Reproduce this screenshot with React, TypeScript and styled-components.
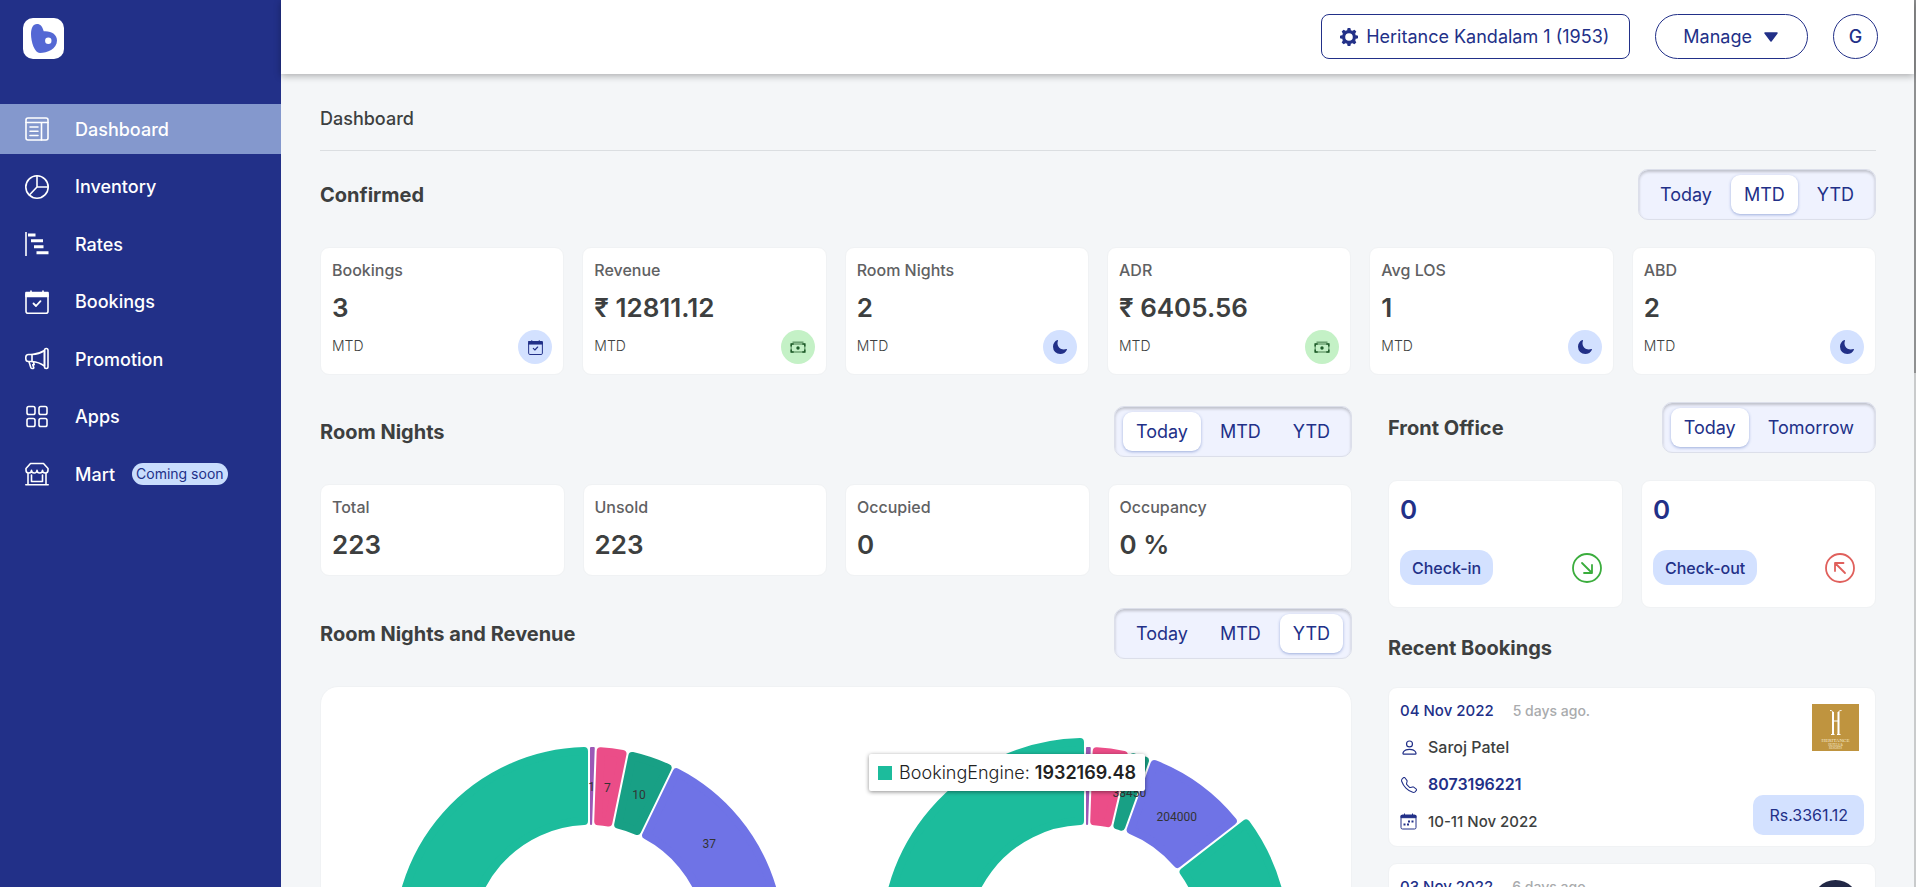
import React from "react";
import styled, { createGlobalStyle } from "styled-components";
import { IoMoon } from "react-icons/io5";
import { BsPerson, BsTelephone } from "react-icons/bs";

const navy = "#223088";
const ink = "#3d3f40";
const paleBlue = "#d3e1ff";

const GlobalStyle = createGlobalStyle`
  *, *::before, *::after { box-sizing: border-box; }
  body {
    margin: 0;
    font-family: Inter, "Liberation Sans", sans-serif;
    color: ${ink};
    background: #f4f6f8;
  }
  h1, h2, h3, p, ul { margin: 0; padding: 0; }
  button { font: inherit; cursor: pointer; }
  a { color: inherit; text-decoration: none; }
  svg { display: block; flex: none; }
`;

/* ---------- shell ---------- */

const Shell = styled.div`
  display: flex;
  height: 100vh;
  overflow: hidden;
`;

const Sidebar = styled.aside`
  flex: none;
  width: 281px;
  background: ${navy};
  color: #fff;
`;

const Brand = styled.a`
  display: block;
  width: 41px;
  margin: 18px 0 45px 23px;
`;

const NavList = styled.ul`
  display: flex;
  flex-direction: column;
  justify-content: space-between;
  min-height: 395px;
  list-style: none;
`;

const NavLink = styled.a<{ $active?: boolean }>`
  display: flex;
  align-items: center;
  height: 50px;
  padding-left: 25px;
  background: ${(p) => (p.$active ? "#8498cd" : "transparent")};
  font-size: 18px;
  font-weight: 500;
`;

const NavText = styled.span`
  margin-left: 26px;
`;

const Soon = styled.span`
  margin-left: 17px;
  padding: 0 4px;
  border-radius: 11px;
  background: #c9ddfd;
  color: ${navy};
  font-size: 14px;
  font-weight: 400;
  line-height: 22px;
`;

const Page = styled.div`
  flex: 1;
  min-width: 0;
  display: flex;
  flex-direction: column;
`;

const TopBar = styled.header`
  flex: none;
  z-index: 1;
  display: flex;
  justify-content: flex-end;
  gap: 25px;
  padding: 14px 36px 15px;
  background: #fff;
  box-shadow: 0 2px 7px rgba(0, 0, 0, 0.3);
`;

const TopButton = styled.button<{ $shape: "box" | "pill" | "round" }>`
  display: flex;
  align-items: center;
  justify-content: center;
  height: 45px;
  width: ${(p) => (p.$shape === "round" ? "45px" : "auto")};
  padding: ${(p) => ({ box: "0 20px 0 18px", pill: "0 29px 0 27px", round: "0" })[p.$shape]};
  gap: ${(p) => (p.$shape === "box" ? "8px" : "12px")};
  border: 1px solid ${navy};
  border-radius: ${(p) => (p.$shape === "box" ? "8px" : "23px")};
  background: #fff;
  color: ${navy};
  font-size: 18px;
  font-weight: ${(p) => (p.$shape === "round" ? 500 : 400)};
`;

const Content = styled.main`
  flex: 1;
  min-height: 0;
  overflow-y: auto;
  scrollbar-width: none;
  padding: 33px 38px 40px 39px;
`;

const PageTitle = styled.h1`
  padding-bottom: 19px;
  border-bottom: 1px solid #dbdee1;
  font-size: 18px;
  font-weight: 500;
  line-height: 24px;
`;

const ScrollTrack = styled.div`
  flex: none;
  width: 2px;
  background: #c9cbcc;
`;

const ScrollThumb = styled.div`
  height: 42%;
  background: #8f9091;
`;

/* ---------- sections ---------- */

const Columns = styled.div`
  display: grid;
  grid-template-columns: minmax(0, 129fr) minmax(0, 61fr);
  gap: 36px;
  align-items: start;
  margin-top: 27px;
`;

const MainColumn = styled.div`
  padding-top: 4px;
`;

const SectionHead = styled.div<{ $top?: number }>`
  display: flex;
  align-items: center;
  justify-content: space-between;
  margin: ${(p) => p.$top ?? 0}px 0 27px;
`;

const SectionTitle = styled.h2`
  font-size: 20px;
  font-weight: 700;
  line-height: 24px;
`;

const ToggleBox = styled.div`
  display: flex;
  gap: 6px;
  padding: 5px 8px;
  border: 1px solid #dcdfea;
  border-radius: 10px;
  background: #eff2fe;
  box-shadow: inset 0 2px 3px rgba(0, 0, 0, 0.2);
`;

const ToggleButton = styled.button<{ $on: boolean }>`
  height: 39px;
  padding: 0 13px;
  border: 0;
  border-radius: 9px;
  background: ${(p) => (p.$on ? "#fff" : "transparent")};
  box-shadow: ${(p) => (p.$on ? "0 1px 3px rgba(60, 90, 180, 0.45)" : "none")};
  color: ${navy};
  font-size: 18px;
`;

const Cards = styled.div<{ $count: number }>`
  display: grid;
  grid-template-columns: repeat(${(p) => p.$count}, minmax(0, 1fr));
  gap: 18px;
`;

const Card = styled.article`
  border: 1px solid #f0f2f4;
  border-radius: 9px;
  background: #fff;
`;

const StatCard = styled(Card)`
  padding: 11px 11px 10px;
`;

const StatLabel = styled.h3`
  color: #5f6163;
  font-size: 16px;
  font-weight: 500;
  line-height: 22px;
`;

const StatValue = styled.p`
  margin: 10px 0 3px;
  font-size: 26px;
  font-weight: 600;
  line-height: 34px;
`;

const StatFoot = styled.div`
  display: flex;
  justify-content: space-between;
  margin-top: 5px;
  font-size: 14px;
  font-weight: 300;
  line-height: 32px;
`;

const Badge = styled.span<{ $green?: boolean }>`
  display: grid;
  place-items: center;
  width: 34px;
  height: 34px;
  border-radius: 50%;
  background: ${(p) => (p.$green ? "#c4f1c6" : paleBlue)};
  color: ${(p) => (p.$green ? "#1f5c2a" : navy)};
`;

/* ---------- front office ---------- */

const OfficeCard = styled(Card)`
  padding: 12px 20px 22px 11px;
`;

const OfficeValue = styled.p`
  color: ${navy};
  font-size: 26px;
  font-weight: 600;
  line-height: 34px;
`;

const OfficeFoot = styled.div`
  display: flex;
  align-items: center;
  justify-content: space-between;
  margin-top: 23px;
`;

const OfficeButton = styled.button`
  height: 35px;
  padding: 0 12px;
  border: 0;
  border-radius: 14px;
  background: ${paleBlue};
  color: ${navy};
  font-size: 16px;
  font-weight: 500;
`;

/* ---------- recent bookings ---------- */

const BookingList = styled.div`
  display: grid;
  gap: 16px;
`;

const BookingCard = styled(Card)`
  display: flex;
  justify-content: space-between;
  padding: 4px 11px 6px 11px;
`;

const BookingLine = styled.p<{ $blue?: boolean; $bold?: boolean; $small?: boolean }>`
  display: flex;
  align-items: center;
  gap: 11px;
  color: ${(p) => (p.$blue ? navy : ink)};
  font-size: ${(p) => (p.$small ? 15 : 16)}px;
  font-weight: ${(p) => (p.$bold ? 600 : 500)};
  line-height: 37px;
`;

const Ago = styled.span`
  margin-left: 8px;
  color: #a9abad;
  font-size: 14px;
`;

const BookingSide = styled.div`
  display: flex;
  flex-direction: column;
  align-items: flex-end;
  justify-content: space-between;
  padding-top: 12px;
`;

const LogoSlot = styled.div`
  margin-right: 5px;
`;

const Amount = styled.span`
  margin-bottom: 5px;
  padding: 0 16px;
  border-radius: 10px;
  background: ${paleBlue};
  color: ${navy};
  font-size: 16px;
  line-height: 40px;
`;

const LineIcon = styled.span`
  display: grid;
  place-items: center;
  width: 17px;
  color: ${navy};
`;

/* ---------- charts ---------- */

const ChartCard = styled(Card)`
  display: grid;
  grid-template-columns: repeat(2, minmax(0, 1fr));
  padding: 50px 18px 40px 20px;
  border-radius: 18px;
`;

const ChartCell = styled.div`
  position: relative;
  display: flex;
  justify-content: center;
`;

const Tooltip = styled.div`
  position: absolute;
  top: 17px;
  right: calc(50% - 60px);
  display: flex;
  align-items: center;
  gap: 7px;
  height: 37px;
  padding: 0 9px;
  border-radius: 2px;
  background: #fff;
  box-shadow: 0 1px 4px rgba(0, 0, 0, 0.45);
  color: #222;
  font-size: 18px;
  font-weight: 300;
  white-space: nowrap;
`;

const TooltipValue = styled.strong`
  font-weight: 600;
`;

const Swatch = styled.span`
  width: 14px;
  height: 14px;
  background: #1cbc9c;
`;

const ChartLabel = styled.text`
  fill: #333;
  font-family: Roboto, "Liberation Sans", sans-serif;
  font-size: 12px;
  text-anchor: middle;
`;

type Slice = { from: number; to: number; color: string; radius?: number; corner?: number; label?: string };

const INNER = 117;

/* Ring sector inset on every side, so that a round-joined stroke restores its size with soft corners. */
function sectorPath(s: Slice) {
  const corner = s.corner ?? 4;
  const ro = (s.radius ?? 195) - corner;
  const ri = INNER + corner;
  const inset = corner + 1;
  const point = (r: number, deg: number, side: number) => {
    const a = (deg * Math.PI) / 180 + side * Math.asin(inset / r);
    return `${(r * Math.sin(a)).toFixed(2)} ${(-r * Math.cos(a)).toFixed(2)}`;
  };
  const large = s.to - s.from > 180 ? 1 : 0;
  return `M${point(ro, s.from, 1)}A${ro} ${ro} 0 ${large} 1 ${point(ro, s.to, -1)}L${point(ri, s.to, -1)}A${ri} ${ri} 0 ${large} 0 ${point(ri, s.from, 1)}Z`;
}

function Donut({ slices, title }: { slices: Slice[]; title: string }) {
  return (
    <svg width="410" height="410" viewBox="-205 -205 410 410" role="img" aria-label={title}>
      {slices.map((s) => (
        <path key={s.from} d={sectorPath(s)} fill={s.color} stroke={s.color} strokeWidth={(s.corner ?? 4) * 2} strokeLinejoin="round" />
      ))}
      {slices.map((s) => {
        const mid = (((s.from + s.to) / 2) * Math.PI) / 180;
        return s.label ? (
          <ChartLabel key={s.from} x={156 * Math.sin(mid)} y={-156 * Math.cos(mid) + 5}>
            {s.label}
          </ChartLabel>
        ) : null;
      })}
    </svg>
  );
}

const nightSlices: Slice[] = [
  { from: 0, to: 2, color: "#9b59b6", corner: 1, label: "1" },
  { from: 2, to: 11.6, color: "#eb4d88", label: "7" },
  { from: 11.6, to: 25.8, color: "#18a085", label: "10" },
  { from: 25.8, to: 75, color: "#6f73e6", label: "37" },
  { from: 75, to: 360, color: "#1cbc9c" },
];

const revenueSlices: Slice[] = [
  { from: 0, to: 2, color: "#9b59b6", corner: 1 },
  { from: 2, to: 13.2, color: "#eb4d88" },
  { from: 13.2, to: 19.8, color: "#18a085", label: "38450" },
  { from: 19.8, to: 52.2, color: "#6f73e6", label: "204000" },
  { from: 52.2, to: 360, color: "#1cbc9c", radius: 204 },
];

/* ---------- icons ---------- */

const Line = ({ children, size = 24 }: { children: React.ReactNode; size?: number }) => (
  <svg width={size} height={size} viewBox="0 0 24 24" fill="none" stroke="currentColor" strokeWidth="1.6" strokeLinejoin="round" strokeLinecap="round" aria-hidden="true">
    {children}
  </svg>
);

const DashboardIcon = () => (
  <Line>
    <rect x="1" y="1" width="22" height="22" rx="2" />
    <path d="M1 5.5h22M16.5 5.5V23M5 10h8M5 14.2h8M5 18.5h8" />
  </Line>
);

const InventoryIcon = () => (
  <Line>
    <circle cx="12" cy="12" r="11.2" />
    <path d="M12 1v11h11M12 12l-7.6 8" />
  </Line>
);

const RatesIcon = () => (
  <Line>
    <path d="M1 0v24" strokeLinecap="butt" />
    <path d="M3 3h7.5M6 8.8h12M9 14.8h9.5M11.5 20.7h12" strokeWidth="3" strokeLinecap="butt" />
  </Line>
);

const CalendarCheckIcon = ({ size }: { size?: number }) => (
  <Line size={size}>
    <rect x="1" y="3" width="22" height="20.2" rx="2" />
    <path d="M1 2.5h22v4H1zM6 1v2M18 1v2" fill="currentColor" />
    <path d="M8.5 13.500l2.500 2.500 4.500-4.800" strokeWidth="1.8" />
  </Line>
);

const PromotionIcon = () => (
  <Line>
    <path d="M7 7.5H3.5A2.7 2.7 0 0 0 .8 10.2v1.6a2.7 2.7 0 0 0 2.7 2.7H7z" />
    <path d="M7 7.5c5-.3 9-1.8 12.5-4v15.600C16 16.500 12 14.800 7 14.500" />
    <rect x="19.5" y="1.5" width="3.5" height="20" rx="1.7" />
    <path d="M4 14.800l1.800 5.700c.5 1.400 3.200 1.300 3 0l-1.100-2.700h1.500l-.8-3" />
  </Line>
);

const AppsIcon = () => (
  <Line>
    <rect x="2" y="1.5" width="8" height="8" rx="1.8" />
    <rect x="14" y="1.5" width="8" height="8" rx="1.8" />
    <rect x="2" y="13.5" width="8" height="8" rx="1.8" />
    <rect x="14" y="13.5" width="8" height="8" rx="1.8" />
  </Line>
);

const MartIcon = () => (
  <Line>
    <path d="M5.5 1.5h13L23 6.5v1.8a2.7 2.7 0 0 1-5.5 0 2.7 2.7 0 0 1-5.5 0 2.7 2.7 0 0 1-5.5 0 2.7 2.7 0 0 1-5.5 0V6.5z" />
    <path d="M3 11.5v11M21 11.5v11M.8 22.700h22.400M6.500 13v6.500h11V13" />
  </Line>
);

const GearIcon = () => (
  <svg width="18" height="18" viewBox="-9 -9 18 18" aria-hidden="true">
    <circle r="5.4" fill="none" stroke="currentColor" strokeWidth="3.2" />
    {[0, 45, 90, 135, 180, 225, 270, 315].map((a) => (
      <path key={a} d="M-2.100 -6.300L-1.300 -9H1.300L2.100 -6.300Z" fill="currentColor" transform={`rotate(${a})`} />
    ))}
  </svg>
);

const CashIcon = () => (
  <svg width="16" height="16" viewBox="0 0 16 16" fill="none" stroke="currentColor" strokeWidth="1.4" aria-hidden="true">
    <path d="M2.500 3.200h11" opacity="0.6" />
    <rect x="1.2" y="5" width="13.6" height="8" rx="1" strokeOpacity="0.5" />
    <path d="M1.200 7.500V5h2.500M14.800 7.500V5h-2.500M1.200 10.500V13h2.500M14.800 10.500V13h-2.500" strokeWidth="1.5" />
    <circle cx="8" cy="9" r="1.7" fill="currentColor" stroke="none" />
  </svg>
);

const StayIcon = () => (
  <svg width="17" height="17" viewBox="0 0 17 17" fill="none" stroke="currentColor" strokeWidth="1" aria-hidden="true">
    <rect x="1" y="2" width="15" height="14" rx="1.5" />
    <path d="M1 2.500h15v2.200H1zM4.500.5v2M12.500.5v2" fill="currentColor" />
    <path d="M3.500 11.500h2M7 11.500h2M8 8.500h2M11.500 8.500h2" strokeWidth="1.8" />
  </svg>
);

const ArrowCircle = ({ out }: { out?: boolean }) => (
  <svg width="30" height="30" viewBox="0 0 30 30" fill="none" stroke={out ? "#e0605c" : "#3bad3d"} strokeWidth="1.8" strokeLinecap="round" strokeLinejoin="round" aria-hidden="true">
    <circle cx="15" cy="15" r="14" />
    {out ? <path d="M20 20L10.500 10.500M10 18v-8h8.500" /> : <path d="M10 10l9.500 9.500M20 12v8h-8" />}
  </svg>
);

const BrandMark = () => (
  <svg width="41" height="41" viewBox="0 0 41 41" role="img" aria-label="Home">
    <rect width="41" height="41" rx="10" fill="#fff" />
    <path d="M14 6c3.500 0 5.300 2.500 6.700 7.200C28.500 12.600 34 16.500 34 22.500 34 31 24 35 17 35 11.500 35 8 24 8 16 8 10 10 6 14 6z" fill="#5468d4" />
    <circle cx="25.300" cy="22.700" r="3.200" fill="#fff" />
  </svg>
);

const HotelLogo = () => (
  <svg width="47" height="47" viewBox="0 0 47 47" role="img" aria-label="Heritance Hotels and Resorts">
    <rect width="47" height="47" fill="#bf943f" />
    <g fill="none" stroke="#fff">
      <path d="M21 8v22M26.500 8v22" strokeWidth="2" />
      <path d="M18 6.500c2 0 3 .5 3 2.500M29.500 6.500c-2 0-3 .5-3 2.500M21 17h5.500M19 30.500h3.500M25 30.500h3.500" strokeWidth="1" />
    </g>
    <g fill="#f6ead0" textAnchor="middle" fontFamily="Liberation Serif, serif">
      <text x="23.500" y="38" fontSize="5">HERITANCE</text>
      <text x="23.500" y="42" fontSize="3">HOTELS &amp;</text>
      <text x="23.500" y="45" fontSize="3">RESORTS</text>
    </g>
  </svg>
);

const RoundLogo = () => (
  <svg width="47" height="47" viewBox="0 0 47 47" role="img" aria-label="Hotel">
    <circle cx="23.500" cy="23.500" r="23.500" fill="#222846" />
  </svg>
);

/* ---------- pieces ---------- */

function Toggle({ options, active, label }: { options: string[]; active: string; label: string }) {
  const [value, setValue] = React.useState(active);
  return (
    <ToggleBox role="group" aria-label={label}>
      {options.map((o) => (
        <ToggleButton key={o} type="button" $on={o === value} aria-pressed={o === value} onClick={() => setValue(o)}>
          {o}
        </ToggleButton>
      ))}
    </ToggleBox>
  );
}

const periods = ["Today", "MTD", "YTD"];

const navItems = [
  { name: "Dashboard", icon: <DashboardIcon /> },
  { name: "Inventory", icon: <InventoryIcon /> },
  { name: "Rates", icon: <RatesIcon /> },
  { name: "Bookings", icon: <CalendarCheckIcon /> },
  { name: "Promotion", icon: <PromotionIcon /> },
  { name: "Apps", icon: <AppsIcon /> },
  { name: "Mart", icon: <MartIcon />, soon: true },
];

const confirmed = [
  { label: "Bookings", value: "3", icon: <CalendarCheckIcon size={15} /> },
  { label: "Revenue", value: "₹ 12811.12", icon: <CashIcon />, green: true },
  { label: "Room Nights", value: "2", icon: <IoMoon size={16} /> },
  { label: "ADR", value: "₹ 6405.56", icon: <CashIcon />, green: true },
  { label: "Avg LOS", value: "1", icon: <IoMoon size={16} /> },
  { label: "ABD", value: "2", icon: <IoMoon size={16} /> },
];

const rooms = [
  { label: "Total", value: "223" },
  { label: "Unsold", value: "223" },
  { label: "Occupied", value: "0" },
  { label: "Occupancy", value: "0 %" },
];

export default function App() {
  return (
    <Shell>
      <GlobalStyle />
      <Sidebar>
        <Brand href="#"><BrandMark /></Brand>
        <nav>
          <NavList>
            {navItems.map((n, i) => (
              <li key={n.name}>
                <NavLink href="#" $active={i === 0}>
                  {n.icon}
                  <NavText>{n.name}</NavText>
                  {n.soon && <Soon>Coming soon</Soon>}
                </NavLink>
              </li>
            ))}
          </NavList>
        </nav>
      </Sidebar>

      <Page>
        <TopBar>
          <TopButton type="button" $shape="box">
            <GearIcon />
            Heritance Kandalam 1 (1953)
          </TopButton>
          <TopButton type="button" $shape="pill">
            Manage
            <svg width="14" height="10" viewBox="0 0 14 10" aria-hidden="true">
              <path d="M1 1h12L7 9z" fill={navy} stroke={navy} strokeWidth="1.5" strokeLinejoin="round" />
            </svg>
          </TopButton>
          <TopButton type="button" $shape="round">G</TopButton>
        </TopBar>

        <Content>
          <PageTitle>Dashboard</PageTitle>

          <SectionHead $top={18}>
            <SectionTitle>Confirmed</SectionTitle>
            <Toggle label="Confirmed period" options={periods} active="MTD" />
          </SectionHead>
          <Cards $count={6}>
            {confirmed.map((c) => (
              <StatCard key={c.label}>
                <StatLabel>{c.label}</StatLabel>
                <StatValue>{c.value}</StatValue>
                <StatFoot>
                  MTD
                  <Badge $green={c.green}>{c.icon}</Badge>
                </StatFoot>
              </StatCard>
            ))}
          </Cards>

          <Columns>
            <MainColumn>
              <SectionHead>
                <SectionTitle>Room Nights</SectionTitle>
                <Toggle label="Room nights period" options={periods} active="Today" />
              </SectionHead>
              <Cards $count={4}>
                {rooms.map((r) => (
                  <StatCard key={r.label}>
                    <StatLabel>{r.label}</StatLabel>
                    <StatValue>{r.value}</StatValue>
                  </StatCard>
                ))}
              </Cards>

              <SectionHead $top={32}>
                <SectionTitle>Room Nights and Revenue</SectionTitle>
                <Toggle label="Chart period" options={periods} active="YTD" />
              </SectionHead>
              <ChartCard>
                <ChartCell>
                  <Donut title="Room nights by source" slices={nightSlices} />
                </ChartCell>
                <ChartCell>
                  <Donut title="Revenue by source" slices={revenueSlices} />
                  <Tooltip role="tooltip">
                    <Swatch />
                    <span>BookingEngine: <TooltipValue>1932169.48</TooltipValue></span>
                  </Tooltip>
                </ChartCell>
              </ChartCard>
            </MainColumn>

            <div>
              <SectionHead>
                <SectionTitle>Front Office</SectionTitle>
                <Toggle label="Front office day" options={["Today", "Tomorrow"]} active="Today" />
              </SectionHead>
              <Cards $count={2}>
                <OfficeCard>
                  <OfficeValue>0</OfficeValue>
                  <OfficeFoot>
                    <OfficeButton type="button">Check-in</OfficeButton>
                    <ArrowCircle />
                  </OfficeFoot>
                </OfficeCard>
                <OfficeCard>
                  <OfficeValue>0</OfficeValue>
                  <OfficeFoot>
                    <OfficeButton type="button">Check-out</OfficeButton>
                    <ArrowCircle out />
                  </OfficeFoot>
                </OfficeCard>
              </Cards>

              <SectionHead $top={28}>
                <SectionTitle>Recent Bookings</SectionTitle>
              </SectionHead>
              <BookingList>
                <BookingCard>
                  <div>
                    <BookingLine $blue $small>04 Nov 2022 <Ago>5 days ago.</Ago></BookingLine>
                    <BookingLine><LineIcon><BsPerson size={19} /></LineIcon>Saroj Patel</BookingLine>
                    <BookingLine $blue $bold><LineIcon><BsTelephone size={16} /></LineIcon><a href="tel:8073196221">8073196221</a></BookingLine>
                    <BookingLine $small><LineIcon><StayIcon /></LineIcon>10-11 Nov 2022</BookingLine>
                  </div>
                  <BookingSide>
                    <LogoSlot><HotelLogo /></LogoSlot>
                    <Amount>Rs.3361.12</Amount>
                  </BookingSide>
                </BookingCard>
                <BookingCard>
                  <div>
                    <BookingLine $blue $small>03 Nov 2022 <Ago>6 days ago.</Ago></BookingLine>
                  </div>
                  <BookingSide>
                    <LogoSlot><RoundLogo /></LogoSlot>
                  </BookingSide>
                </BookingCard>
              </BookingList>
            </div>
          </Columns>
        </Content>
      </Page>

      <ScrollTrack aria-hidden="true"><ScrollThumb /></ScrollTrack>
    </Shell>
  );
}
